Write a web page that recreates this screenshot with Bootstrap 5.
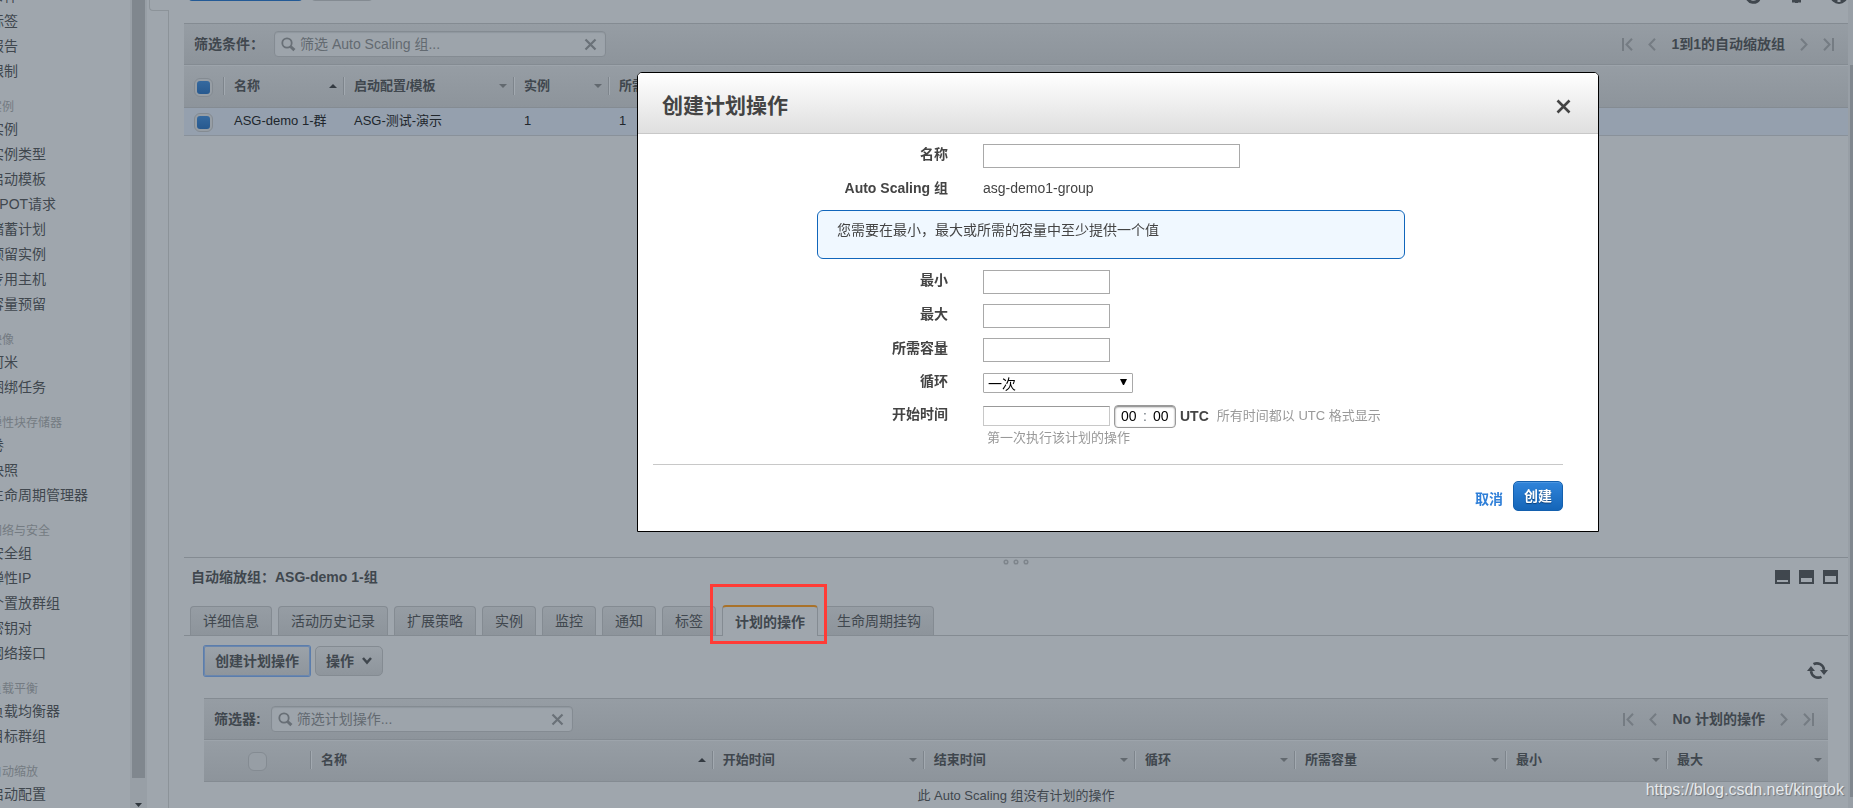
<!DOCTYPE html>
<html lang="zh-CN">
<head>
<meta charset="utf-8">
<meta name="viewport" content="width=device-width, initial-scale=1">
<title>Auto Scaling 组</title>
<link href="https://cdn.jsdelivr.net/npm/bootstrap@5.3.0/dist/css/bootstrap.min.css" rel="stylesheet">
<style>
:root{--page:#9fa6ad;--line:#848b92;--ink:#40474e;--bar:linear-gradient(#969da4,#8d949b);--soft:#6a7178}
body{font-family:"Liberation Sans","Noto Sans CJK SC",sans-serif;font-size:14px;line-height:20px;color:var(--ink);background:var(--page)}
button,input,select{font:inherit;color:inherit}
.side-nav{width:149px;padding-right:2px}
.side-list{margin:-16px 0 0 -10px;white-space:nowrap}
.side-list a{display:block;color:var(--ink);text-decoration:none;line-height:25px}
.side-list h2{font-size:12px;font-weight:400;line-height:19px;color:#747b82;margin:0;padding-top:14px}
.side-scroll{width:17px;background:#989fa6;padding-bottom:1px}
.side-thumb{width:13px;background:#80878e;flex-grow:1;margin-bottom:25px}
.notch{width:20px;height:11px;border-left:1px solid #8c9399;border-bottom:1px solid #8c9399;border-bottom-left-radius:4px}
.gutter{width:20px}
.gutter-line{width:1px;background:#8c9399}
.workspace{padding-left:15px;min-width:0}
.action-bar{height:23px}
.action-bar .stub{height:30px;margin-top:-29px;border:1px solid var(--line);border-radius:4px;background:#8d949b}
.action-bar .primary{width:115px;background:#235a96;border-color:#235a96}
.action-bar .plain{width:62px}
.top-icons{gap:24px}
.top-icons svg{margin-top:-14px}
.tool-strip{height:42px;background:var(--bar);border:solid var(--line);border-width:1px 0}
.tool-strip label{margin:0 10px}
.tool-strip label,.pager span{font-weight:700}
.search-box{height:26px;border:1px solid var(--line);border-radius:4px;background:#9da4ab;box-shadow:inset 0 1px 1px #90979e;padding:0 8px 0 6px}
.search-box input{border:0;background:none;outline:0;padding:0 0 0 4px;min-width:0}
.search-box input::placeholder{color:#636a71;opacity:1}
.search-box .bare{color:var(--soft)}
.wide{width:332px}.narrow{width:302px}
.bare{border:0;background:none;padding:0;display:inline-flex;color:inherit}
.pager{gap:15px;margin-right:14px}
.pager .bare{color:#757c83}
.data-grid{table-layout:fixed;width:100%;border-collapse:separate;border-spacing:0;font-size:13px}
.data-grid th{height:43px;padding:0 6px 2px 0;background:var(--bar);border-bottom:1px solid var(--line);border-top:1px solid #9da4ab;vertical-align:middle}
.plan-grid th{height:42px}
.data-grid td{height:28px;padding:0 0 2px 11px;background:#95a0ae;border-bottom:1px solid #89919a;color:#20262c}
.data-grid .tick{padding:0;text-align:center}
.data-grid .empty{height:26px;background:none;border:0;text-align:center;color:var(--ink);padding:2px 0 0}
.col-head{height:18px;border-left:1px solid #7e858c;box-shadow:inset 1px 0 #a2a9b0;padding-left:10px}
.ticker{appearance:none;width:19px;height:19px;border:1px solid var(--line);border-radius:6px;padding:2px;margin:0;vertical-align:middle;background:#979ea5}
.ticker:checked{background:linear-gradient(#35699f,#27598f) content-box,#979ea5}
.detail{border-top:1px solid var(--line)}
.grip{left:50%;top:1px;transform:translateX(-50%)}
.detail-title{font-size:14px;font-weight:700;line-height:20px;margin:0}
.detail-head{padding:9px 10px 0 7px;height:48px}
.panel-size{gap:9px;padding-top:3px}
.tab-strip{gap:6px;padding-left:6px;border-bottom:1px solid var(--line)}
.tab-strip button{height:29px;border:1px solid var(--line);border-bottom:0;border-radius:4px 4px 0 0;background:var(--bar);padding:0 12px;white-space:nowrap}
.tab-strip .current{height:31px;margin:-1px 0 -1px;border-top:2px solid #a9722a;background:var(--page);font-weight:700}
.marker{left:-13px;top:-23px;width:117px;height:60px;border:3px solid #ff3b36;pointer-events:none;z-index:2}
.detail-body{padding:10px 20px 0 20px}
.plan-actions{height:34px;gap:5px;margin-bottom:18px}
.soft-btn{height:30px;border:1px solid var(--line);border-radius:5px;background:linear-gradient(#9ba2a9,#8e959c);font-weight:700;padding:0 10px}
.soft-btn.focused{box-shadow:0 0 0 1px #5b7dac;border-color:#6a86ad;border-radius:2px}
.page-scroll{width:5px;background:#989fa6;padding:65px 0 11px 2px}
.page-scroll div{background:#80878e}
/* dialog */
.dialog-layer{inset:0;padding:72px 254px 0 0;z-index:10;pointer-events:none}
.dialog-box{width:962px;height:max-content;background:#fff;border:1px solid #000;border-radius:5px 5px 0 0;color:#444;pointer-events:auto}
.dialog-head{height:61px;background:linear-gradient(#fff,#dfdfdf);border-bottom:1px solid #c8c8c8;border-radius:4px 4px 0 0;padding:6px 27px 0 24px}
.dialog-head h1{font-size:21px;line-height:28px;font-weight:700;margin:0}
.dialog-fields{padding-top:5px}
.form-line{display:grid;grid-template-columns:310px 1fr;column-gap:35px;height:34px;align-items:center}
.form-line.short{height:32px}
.form-line>label,.form-line>.caption{text-align:right;font-weight:700;padding-bottom:4px}
.field{border:1px solid #a9a9a9;height:24px;padding:0 4px;background:#fff}
.w-name{width:257px}.w-num{width:127px}.w-pick{width:150px}
.pick{height:20px;line-height:18px;appearance:none;border-radius:1px;color:#000;padding:1px 4px 0}
.pick-arrow{right:6px;top:6px;pointer-events:none}
.field.date{height:20px;border-color:#999 #c8c8c8 #c8c8c8 #c8c8c8}
.notice{margin:3px 193px 6px 179px;height:49px;border:1px solid #1166bb;border-radius:6px;background:#f0f8ff;padding:9px 19px}
.clock{width:62px;height:23px;border:1px solid #999;border-radius:4px;box-shadow:inset 0 1px 2px #777;padding:0 6px;color:#000}
.clock input{width:16px;border:0;padding:0;background:none}
.pale{font-size:13px;color:#999}
.hint{margin:-4px 0 0 349px;line-height:18px;padding-bottom:17px}
.dialog-foot{margin:0 35px 0 15px;border-top:1px solid #c8c8c8;padding:16px 0 20px;gap:10px}
.dialog-foot a{color:#2f7fd8;text-decoration:none;font-weight:700;padding-top:6px}
.go-btn{height:30px;width:50px;border:1px solid #1460ae;border-radius:5px;background:linear-gradient(#3084da,#1465b8);color:#fff;font-weight:700;padding:0;text-shadow:0 1px 1px #0a3f78;box-shadow:inset 0 1px #4c96e0}
.stamp{right:9px;bottom:8px;font-size:16px;color:#e6e9ec;text-shadow:1px 1px 1px #6c737a;z-index:5}
</style>
</head>
<body class="vh-100 overflow-hidden">
<svg width="0" height="0" class="position-absolute" aria-hidden="true">
  <symbol id="lens" viewBox="0 0 15 15"><circle cx="6" cy="6" r="4.7" fill="none" stroke="#686f76" stroke-width="1.8"/><path d="M9.5 9.5 13.4 13.2" stroke="#686f76" stroke-width="3"/></symbol>
  <symbol id="cross" viewBox="0 0 13 13"><path d="M1.5 1.5 11.5 11.5M11.5 1.5 1.5 11.5" stroke="currentColor" stroke-width="2.2"/></symbol>
  <symbol id="prev" viewBox="0 0 8 13"><path d="M7 .8 1.5 6.5 7 12.2" fill="none" stroke="currentColor" stroke-width="2"/></symbol>
  <symbol id="next" viewBox="0 0 8 13"><path d="M1 .8 6.5 6.5 1 12.2" fill="none" stroke="currentColor" stroke-width="2"/></symbol>
  <symbol id="first" viewBox="0 0 11 13"><path d="M1 0V13M10 .8 4.5 6.5 10 12.2" fill="none" stroke="currentColor" stroke-width="2"/></symbol>
  <symbol id="last" viewBox="0 0 11 13"><path d="M10 0V13M1 .8 6.5 6.5 1 12.2" fill="none" stroke="currentColor" stroke-width="2"/></symbol>
  <symbol id="up" viewBox="0 0 8 4"><path d="M0 4 4 0 8 4Z" fill="#343b42"/></symbol>
  <symbol id="down" viewBox="0 0 8 4"><path d="M0 0H8L4 4Z" fill="#62696f"/></symbol>
  <symbol id="cycle" viewBox="0 0 21 19"><path d="M6.5 3.2A7.2 7.2 0 0 1 17 8.8M14.5 15.8A7.2 7.2 0 0 1 4 10.2" fill="none" stroke="#40474e" stroke-width="2.6"/><path d="M13 9H21L17 14ZM0 10H8L4 5Z" fill="#40474e"/></symbol>
</svg>

<div class="d-flex h-100 position-relative">
  <nav class="side-nav d-flex overflow-hidden flex-shrink-0" aria-label="导航">
    <div class="flex-grow-1 overflow-hidden">
      <div class="side-list">
        <a href="#">事件</a><a href="#">标签</a><a href="#">报告</a><a href="#">限制</a>
        <h2>实例</h2>
        <a href="#">实例</a><a href="#">实例类型</a><a href="#">启动模板</a><a href="#">SPOT请求</a><a href="#">储蓄计划</a><a href="#">预留实例</a><a href="#">专用主机</a><a href="#">容量预留</a>
        <h2>映像</h2>
        <a href="#">阿米</a><a href="#">捆绑任务</a>
        <h2>弹性块存储器</h2>
        <a href="#">卷</a><a href="#">快照</a><a href="#">生命周期管理器</a>
        <h2>网络与安全</h2>
        <a href="#">安全组</a><a href="#">弹性IP</a><a href="#">个置放群组</a><a href="#">密钥对</a><a href="#">网络接口</a>
        <h2>负载平衡</h2>
        <a href="#">负载均衡器</a><a href="#">目标群组</a>
        <h2>自动缩放</h2>
        <a href="#">启动配置</a>
      </div>
    </div>
    <div class="side-scroll d-flex flex-column align-items-center flex-shrink-0" aria-hidden="true">
      <div class="side-thumb"></div>
      <svg width="7" height="4"><path d="M0 0H7L3.500 4Z" fill="#2f363c"/></svg>
    </div>
  </nav>
  <div class="gutter d-flex flex-column align-items-end flex-shrink-0" aria-hidden="true">
    <div class="notch"></div><div class="gutter-line flex-grow-1"></div>
  </div>

  <main class="workspace flex-grow-1 d-flex flex-column">
    <div class="action-bar d-flex align-items-start overflow-hidden flex-shrink-0">
      <button class="stub primary ms-1" aria-label="创建"></button>
      <button class="stub plain ms-2" aria-label="操作"></button>
      <div class="top-icons ms-auto d-flex align-items-start">
        <svg width="19" height="19" viewBox="0 0 19 19"><path d="M15 13.500A7 7 0 0 1 3 12" fill="none" stroke="#40474e" stroke-width="3"/></svg>
        <svg width="19" height="18" viewBox="0 0 19 18"><circle cx="9.500" cy="8" r="5" fill="none" stroke="#40474e" stroke-width="3"/><path d="M9.500 12V17M5 15H14" stroke="#40474e" stroke-width="3"/></svg>
        <svg width="18" height="19" viewBox="0 0 18 19"><circle cx="9" cy="9" r="9" fill="#40474e"/><path d="M9 13V16" stroke="#9fa6ad" stroke-width="3"/></svg>
      </div>
    </div>
    <section class="flex-grow-1 overflow-hidden">
      <div class="tool-strip d-flex align-items-center">
        <label for="groupFilter">筛选条件：</label>
        <div class="search-box wide d-flex align-items-center">
          <svg width="15" height="15"><use href="#lens"/></svg>
          <input id="groupFilter" class="flex-grow-1" type="text" placeholder="筛选 Auto Scaling 组...">
          <button class="bare" aria-label="清除"><svg width="13" height="13"><use href="#cross"/></svg></button>
        </div>
        <div class="pager ms-auto d-flex align-items-center">
          <button class="bare" aria-label="首页"><svg width="11" height="13"><use href="#first"/></svg></button>
          <button class="bare" aria-label="上一页"><svg width="8" height="13"><use href="#prev"/></svg></button>
          <span>1到1的自动缩放组</span>
          <button class="bare" aria-label="下一页"><svg width="8" height="13"><use href="#next"/></svg></button>
          <button class="bare" aria-label="末页"><svg width="11" height="13"><use href="#last"/></svg></button>
        </div>
      </div>
      <table class="data-grid">
        <colgroup><col style="width:39px"><col style="width:120px"><col style="width:170px"><col style="width:95px"><col></colgroup>
        <thead><tr>
          <th class="tick"><input class="ticker" type="checkbox" checked aria-label="全选"></th>
          <th><div class="col-head d-flex align-items-center justify-content-between">名称<svg width="8" height="4"><use href="#up"/></svg></div></th>
          <th><div class="col-head d-flex align-items-center justify-content-between">启动配置/模板<svg width="8" height="4"><use href="#down"/></svg></div></th>
          <th><div class="col-head d-flex align-items-center justify-content-between">实例<svg width="8" height="4"><use href="#down"/></svg></div></th>
          <th><div class="col-head d-flex align-items-center">所需</div></th>
        </tr></thead>
        <tbody><tr>
          <td class="tick"><input class="ticker" type="checkbox" checked aria-label="选择 ASG-demo 1"></td>
          <td>ASG-demo 1-群</td><td>ASG-测试-演示</td><td>1</td><td>1</td>
        </tr></tbody>
      </table>
    </section>

    <section class="detail position-relative flex-shrink-0">
      <svg class="grip position-absolute" width="26" height="6" aria-hidden="true"><g fill="#9fa6ad" stroke="#7e858c" stroke-width="1.500"><circle cx="3" cy="3" r="1.800"/><circle cx="13" cy="3" r="1.800"/><circle cx="23" cy="3" r="1.800"/></g></svg>
      <div class="detail-head d-flex justify-content-between align-items-start">
        <h2 class="detail-title">自动缩放组：ASG-demo 1-组</h2>
        <div class="panel-size d-flex">
          <button class="bare" aria-label="最小化"><svg width="15" height="14"><path d="M0 0H15V14H0ZM2 10V12H13V10Z" fill="#40474e" fill-rule="evenodd"/></svg></button>
          <button class="bare" aria-label="半屏"><svg width="15" height="14"><path d="M0 0H15V14H0ZM2 8V12H13V8Z" fill="#40474e" fill-rule="evenodd"/></svg></button>
          <button class="bare" aria-label="最大化"><svg width="15" height="14"><path d="M0 0H15V14H0ZM2 6V12H13V6Z" fill="#40474e" fill-rule="evenodd"/></svg></button>
        </div>
      </div>
      <div class="tab-strip d-flex align-items-end">
        <button>详细信息</button><button>活动历史记录</button><button>扩展策略</button><button>实例</button><button>监控</button><button>通知</button><button>标签</button><button class="current position-relative">计划的操作<span class="marker position-absolute"></span></button><button>生命周期挂钩</button>
      </div>
      <div class="detail-body">
        <div class="plan-actions d-flex align-items-start">
          <button class="soft-btn focused">创建计划操作</button>
          <button class="soft-btn d-flex align-items-center gap-2">操作<svg width="10" height="8" viewBox="0 0 10 8"><path d="M1 1 5 5.500 9 1" fill="none" stroke="#40474e" stroke-width="2.500"/></svg></button>
          <button class="bare ms-auto align-self-end" aria-label="刷新"><svg width="21" height="19"><use href="#cycle"/></svg></button>
        </div>
        <div class="tool-strip d-flex align-items-center">
          <label for="planFilter">筛选器:</label>
          <div class="search-box narrow d-flex align-items-center">
            <svg width="15" height="15"><use href="#lens"/></svg>
            <input id="planFilter" class="flex-grow-1" type="text" placeholder="筛选计划操作...">
            <button class="bare" aria-label="清除"><svg width="13" height="13"><use href="#cross"/></svg></button>
          </div>
          <div class="pager ms-auto d-flex align-items-center">
            <button class="bare" aria-label="首页"><svg width="11" height="13"><use href="#first"/></svg></button>
            <button class="bare" aria-label="上一页"><svg width="8" height="13"><use href="#prev"/></svg></button>
            <span>No 计划的操作</span>
            <button class="bare" aria-label="下一页"><svg width="8" height="13"><use href="#next"/></svg></button>
            <button class="bare" aria-label="末页"><svg width="11" height="13"><use href="#last"/></svg></button>
          </div>
        </div>
        <table class="data-grid plan-grid">
          <colgroup><col style="width:106px"><col><col style="width:13%"><col style="width:13%"><col style="width:160px"><col style="width:13%"><col style="width:161px"><col style="width:162px"></colgroup>
          <thead><tr>
            <th class="tick"><input class="ticker" type="checkbox" aria-label="全选计划"></th>
            <th><div class="col-head d-flex align-items-center justify-content-between">名称<svg width="8" height="4"><use href="#up"/></svg></div></th>
            <th><div class="col-head d-flex align-items-center justify-content-between">开始时间<svg width="8" height="4"><use href="#down"/></svg></div></th>
            <th><div class="col-head d-flex align-items-center justify-content-between">结束时间<svg width="8" height="4"><use href="#down"/></svg></div></th>
            <th><div class="col-head d-flex align-items-center justify-content-between">循环<svg width="8" height="4"><use href="#down"/></svg></div></th>
            <th><div class="col-head d-flex align-items-center justify-content-between">所需容量<svg width="8" height="4"><use href="#down"/></svg></div></th>
            <th><div class="col-head d-flex align-items-center justify-content-between">最小<svg width="8" height="4"><use href="#down"/></svg></div></th>
            <th><div class="col-head d-flex align-items-center justify-content-between">最大<svg width="8" height="4"><use href="#down"/></svg></div></th>
          </tr></thead>
          <tbody><tr><td class="empty" colspan="8">此 Auto Scaling 组没有计划的操作</td></tr></tbody>
        </table>
      </div>
    </section>
  </main>
  <div class="page-scroll d-flex flex-column flex-shrink-0" aria-hidden="true"><div class="flex-grow-1"></div></div>
  <div class="stamp position-absolute">https://blog.csdn.net/kingtok</div>
</div>

<div class="dialog-layer position-fixed d-flex justify-content-end align-items-start">
  <form class="dialog-box" role="dialog" aria-labelledby="dialogTitle">
    <div class="dialog-head d-flex align-items-center justify-content-between">
      <h1 id="dialogTitle">创建计划操作</h1>
      <button type="button" class="bare" aria-label="关闭"><svg width="15" height="15"><path d="M1.500 1.500 13.500 13.500M13.500 1.500 1.500 13.500" stroke="#444" stroke-width="2.600"/></svg></button>
    </div>
    <div class="dialog-fields">
      <div class="form-line"><label for="fName">名称</label><input id="fName" type="text" class="field w-name"></div>
      <div class="form-line"><span class="caption">Auto Scaling 组</span><span class="pb-1">asg-demo1-group</span></div>
      <div class="notice">您需要在最小，最大或所需的容量中至少提供一个值</div>
      <div class="form-line"><label for="fMin">最小</label><input id="fMin" type="text" class="field w-num"></div>
      <div class="form-line"><label for="fMax">最大</label><input id="fMax" type="text" class="field w-num"></div>
      <div class="form-line"><label for="fCap">所需容量</label><input id="fCap" type="text" class="field w-num"></div>
      <div class="form-line short"><label for="fLoop">循环</label>
        <div class="position-relative w-pick d-flex"><select id="fLoop" class="field pick w-pick"><option>一次</option></select>
          <svg class="pick-arrow position-absolute" width="7" height="7"><path d="M0 0H7L4 6H3Z" fill="#000"/></svg></div>
      </div>
      <div class="form-line"><label for="fStart">开始时间</label>
        <div class="d-flex align-items-center gap-1"><input id="fStart" type="text" class="field date w-num">
          <div class="clock d-flex align-items-center justify-content-between"><input aria-label="时" value="00"><span class="text-secondary">:</span><input aria-label="分" value="00"></div>
          <b>UTC</b><span class="pale ms-1">所有时间都以 UTC 格式显示</span></div>
      </div>
      <div class="pale hint">第一次执行该计划的操作</div>
    </div>
    <div class="dialog-foot d-flex justify-content-end align-items-center">
      <a href="#">取消</a><button type="button" class="go-btn">创建</button>
    </div>
  </form>
</div>
<script src="https://cdn.jsdelivr.net/npm/bootstrap@5.3.0/dist/js/bootstrap.bundle.min.js"></script>
</body>
</html>
